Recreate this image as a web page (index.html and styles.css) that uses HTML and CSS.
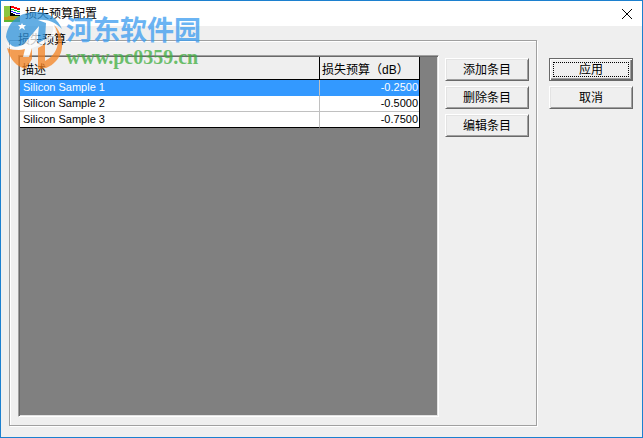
FILE: index.html
```html
<!DOCTYPE html>
<html lang="zh-CN">
<head>
  <meta charset="UTF-8">
  <meta name="viewport" content="width=device-width, initial-scale=1">
  <title>损失预算配置</title>
  <link rel="stylesheet" href="styles.css">
</head>
<body>

  <div class="dialog">
    <header class="titlebar">
      <svg class="app-icon" width="16" height="16" viewBox="0 0 16 16" shape-rendering="crispEdges">
        <rect width="16" height="16" fill="#8cc63f"/>
        <path d="M0 11h4v-1h6v1h6v5H0z" fill="#c8961e"/>
        <path d="M0 14h16v2H0z" fill="#5cb531"/>
        <path d="M6 0h10v9H6z" fill="#fff"/>
        <path d="M6 0h1v7h2v1h2v1h5v1H6z" fill="#000"/>
        <path d="M7 0h3v1h3v1h3v2h-3V3h-3V2H7z" fill="#f00"/>
        <path d="M7 3h3v1h3v1h3v1h-3V5h-3V4H7z" fill="#0b3"/>
        <path d="M7 5h2v1h3v1h4v1h-4V7H9V6H7z" fill="#22f"/>
      </svg>
      <h1 class="title">损失预算配置</h1>
      <button class="close" type="button" aria-label="关闭">
        <svg width="10" height="10" viewBox="0 0 10 10"><path d="M0 0l10 10M10 0L0 10" stroke="#000"/></svg>
      </button>
    </header>

    <main class="content">
      <fieldset class="group">
        <legend>损失预算</legend>
        <div class="list">
          <table>
            <thead>
              <tr><th>描述</th><th class="loss">损失预算（dB）</th></tr>
            </thead>
            <tbody>
              <tr class="selected"><td>Silicon Sample 1</td><td class="loss">-0.2500</td></tr>
              <tr><td>Silicon Sample 2</td><td class="loss">-0.5000</td></tr>
              <tr><td>Silicon Sample 3</td><td class="loss">-0.7500</td></tr>
            </tbody>
          </table>
        </div>
        <div class="buttons">
          <button type="button">添加条目</button>
          <button type="button">删除条目</button>
          <button type="button">编辑条目</button>
        </div>
      </fieldset>
      <div class="buttons actions">
        <button class="default" type="button">应用</button>
        <button type="button">取消</button>
      </div>
    </main>

    <div class="watermark">
      <svg width="60" height="60" viewBox="0 0 60 60">
        <path d="M1 26C3 10 15 1 31 1c13 0 22 7 26 17C50 11 42 8 33 9l8 3-1 17-7 3V17L19 35C12 38 4 36 1 26z" fill="#2f93dc"/>
        <path d="M49 14c10 9 11 27 2 36-6 7-13 8-18 8V37l7-4v17c9-5 13-12 13-21 0-6-1-10-4-15z" fill="#f58220"/>
        <path d="M2 37c6 3 12 2 17-1h8v12l-6 10C12 56 5 49 2 37z" fill="#f58220"/>
        <path d="M0 29c3 7 12 9 19 4l15-18-2 18 10-6C51 21 50 14 42 9c7 3 12 12 5 18-5 5-14 8-20 10l-3 9h-6l2-8C10 41 2 37 0 29z" fill="#fff"/>
        <path d="M17 12l1 2 3 0-2 2 1 3-3-2-3 2 1-3-2-2h3z" fill="#fff"/>
      </svg>
      <div class="brand">
        <div class="brand-name">河东软件园</div>
        <div class="brand-url">www.pc0359.cn</div>
      </div>
    </div>
  </div>

</body>
</html>
```
FILE: styles.css
```css
* {
  box-sizing: border-box;
}
body {
  margin: 0;
  font: 12px/16px "Liberation Sans", "Noto Sans CJK SC", sans-serif;
  color: #000;
}
.dialog {
  position: relative;
  display: flex;
  flex-direction: column;
  min-height: 100vh;
  border: 1px solid #1c80cf;
  background: #efefef;
}

/* title bar */
.titlebar {
  display: flex;
  align-items: center;
  height: 25px;
  padding: 0 2px 0 3px;
  background: #fff;
}
.title {
  flex: 1;
  margin: 0 0 0 5px;
  font-size: 12px;
  font-weight: normal;
}
.close {
  display: flex;
  padding: 8px;
  border: 0;
  background: none;
}

/* content */
.content {
  flex: 1;
  display: flex;
  align-items: stretch;
  gap: 12px;
  padding: 6px 9px 11px 8px;
}
.group {
  flex: 1;
  display: flex;
  gap: 6px;
  min-width: 0;
  margin: 0;
  padding: 7px 7px 8px 8px;
  border: 1px solid #a0a0a0;
  box-shadow: 1px 1px #fff, inset 1px 1px #fff;
}
.group legend {
  padding: 0;
  background: #efefef;
}
.list {
  flex: 1;
  padding: 1px 18px 1px 1px;
  border: 1px solid;
  border-color: #a0a0a0 #fff #fff #a0a0a0;
  box-shadow: inset 1px 1px #696969, inset -1px -1px #e3e3e3;
  background: #808080;
}
table {
  width: 100%;
  border-collapse: separate;
  border-spacing: 0;
  background: #fff;
  border-right: 1px solid #000;
}
th {
  height: 23px;
  padding: 3px 2px 0;
  border-bottom: 1px solid #000;
  background: #efefef;
  font-weight: normal;
  text-align: left;
}
td {
  height: 16px;
  padding: 0 3px;
  border-bottom: 1px solid #c0c0c0;
  font-size: 11px;
  line-height: 15px;
}
th.loss {
  border-left: 1px solid #000;
}
td.loss {
  width: 100px;
  padding-right: 1px;
  border-left: 1px solid #c0c0c0;
  text-align: right;
}
tbody tr:last-child td {
  border-bottom-color: #000;
}
.selected td {
  border-bottom-color: #3399ff;
  background: #3399ff;
  color: #fff;
}

/* push buttons */
.buttons {
  display: flex;
  flex-direction: column;
  gap: 5px;
  width: 84px;
  padding-top: 3px;
}
.buttons button {
  height: 23px;
  padding: 0;
  border: 1px solid;
  border-color: #fff #696969 #696969 #fff;
  box-shadow: inset 1px 1px #e3e3e3, inset -1px -1px #a0a0a0;
  background: #efefef;
  color: #000;
  font: inherit;
}
.actions {
  padding-top: 26px;
}
.buttons .default {
  border-color: #696969;
  box-shadow: inset 1px 1px #fff, inset -1px -1px #696969, inset -2px -2px #a0a0a0;
  outline: 1px dotted #000;
  outline-offset: -5px;
}

/* watermark over the window */
.watermark {
  position: absolute;
  top: 10px;
  left: 4px;
  display: flex;
  opacity: 0.75;
  pointer-events: none;
}
.brand {
  padding: 3px 0 0 1px;
}
.brand-name {
  color: #3a9cf0;
  font: bold 27px/30px "Noto Sans CJK SC", sans-serif;
}
.brand-url {
  color: #3fae3f;
  font: bold 20px/26px "Liberation Serif", serif;
}
```
